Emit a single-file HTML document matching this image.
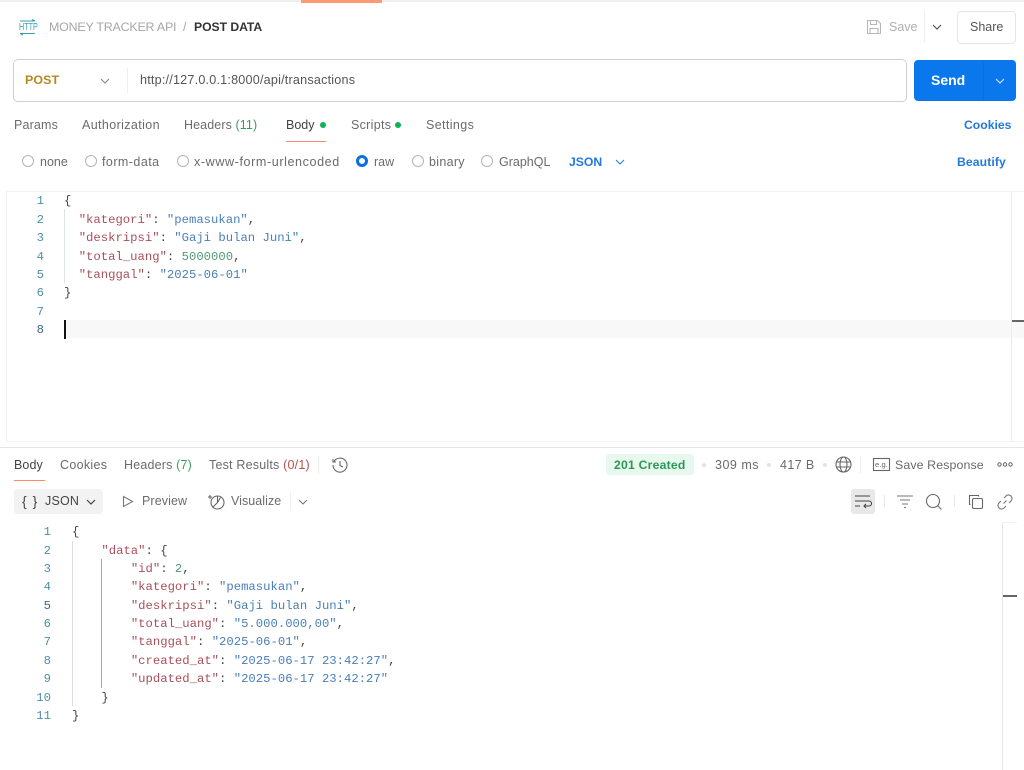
<!DOCTYPE html>
<html><head><meta charset="utf-8"><style>
html,body{margin:0;padding:0;background:#fff;}
body{width:1024px;height:770px;overflow:hidden;position:relative;font-family:"Liberation Sans",sans-serif;font-size:12.5px;color:#6b6b6b;filter:blur(.25px);}
.t{position:absolute;white-space:nowrap;line-height:16px;}
.b{position:absolute;}
.c{position:absolute;white-space:pre;font-family:"Liberation Mono",monospace;font-size:12.25px;line-height:18px;color:#444;margin-top:1px;}
.n{position:absolute;white-space:pre;font-family:"Liberation Mono",monospace;font-size:12.25px;line-height:18px;color:#4f8fa8;text-align:right;width:20px;margin-top:1px;}
.k{color:#a8505a}.s{color:#4a7fb8}.m{color:#4f9a78}
.r{position:absolute;width:12px;height:12px;box-sizing:border-box;border:1px solid #b4b4b4;border-radius:50%;top:155px;}
svg{position:absolute;overflow:visible;fill:none;}
.blue{color:#2279dc;font-weight:bold}
</style></head><body>

<div class="b" style="left:0;top:0;width:1024px;height:2px;background:#f0f0f0"></div>
<div class="b" style="left:301px;top:0;width:81px;height:3px;background:#ff9a76"></div>

<svg style="left:19px;top:19px" width="18" height="17" viewBox="0 0 18 17" stroke="#3a9db0" stroke-width="1">
<path d="M1 2h15M13 0.5l3 1.5"/><path d="M1 14.5h15M1 14.5l3 1.5"/>
</svg>
<div class="t" style="left:19px;top:22px;font-size:10px;line-height:11px;color:#3a9db0;transform:scaleX(.72);transform-origin:0 0">HTTP</div>

<div class="t" style="left:49px;top:19px;color:#a6a6a6;font-size:12.4px;letter-spacing:-.18px">MONEY TRACKER API</div>
<div class="t" style="left:183px;top:19px;color:#a6a6a6">/</div>
<div class="t" style="left:194px;top:19px;color:#333;font-size:12.2px;font-weight:bold;letter-spacing:-.05px">POST DATA</div>

<svg style="left:866px;top:19px" width="16" height="16" viewBox="0 0 16 16" stroke="#b8b8b8" stroke-width="1.1">
<path d="M1.5 1.5h10l3 3v10h-13z"/><path d="M4.5 1.5v4h6v-4M4 14.5v-5h8v5"/>
</svg>
<div class="t" style="left:889px;top:19px;color:#b0b0b0">Save</div>
<div class="b" style="left:924px;top:11px;width:1px;height:32px;background:#f0f0f0"></div>
<svg style="left:932px;top:24px" width="10" height="6" viewBox="0 0 10 6" stroke="#555" stroke-width="1.2"><path d="M1 1l4 4 4-4"/></svg>
<div class="b" style="left:957px;top:11px;width:59px;height:33px;box-sizing:border-box;border:1px solid #e6e6e6;border-radius:4px"></div>
<div class="t" style="left:970px;top:19px;color:#555">Share</div>

<div class="b" style="left:13px;top:59px;width:894px;height:43px;box-sizing:border-box;border:1px solid #cfcfcf;border-radius:5px"></div>
<div class="t" style="left:25px;top:72px;color:#b5871f;font-weight:bold;font-size:12.4px;letter-spacing:.1px">POST</div>
<svg style="left:100px;top:78px" width="10" height="6" viewBox="0 0 10 6" stroke="#888" stroke-width="1.1"><path d="M1 1l4 4 4-4"/></svg>
<div class="b" style="left:127px;top:68px;width:1px;height:25px;background:#eee"></div>
<div class="t" style="left:140px;top:72px;color:#555;font-size:12.6px;letter-spacing:.21px">http://127.0.0.1:8000/api/transactions</div>

<div class="b" style="left:914px;top:60px;width:102px;height:41px;background:#0a78ec;border-radius:4px"></div>
<div class="b" style="left:983px;top:60px;width:1px;height:41px;background:#0b70dd"></div>
<div class="t" style="left:931px;top:72px;color:#fff;font-weight:bold;font-size:14px">Send</div>
<svg style="left:995px;top:78px" width="10" height="6" viewBox="0 0 10 6" stroke="#d5e8fc" stroke-width="1.1"><path d="M1 1l4 4 4-4"/></svg>

<div class="t" style="left:14px;top:117px;letter-spacing:.15px">Params</div>
<div class="t" style="left:82px;top:117px;letter-spacing:.38px">Authorization</div>
<div class="t" style="left:184px;top:117px;letter-spacing:.1px">Headers <span style="color:#3d9a62">(11)</span></div>
<div class="t" style="left:286px;top:117px;color:#444">Body</div>
<div class="b" style="left:320px;top:122px;width:6px;height:6px;border-radius:50%;background:#0cb25a"></div>
<div class="b" style="left:286px;top:141px;width:40px;height:1px;background:#ff8a65"></div>
<div class="t" style="left:351px;top:117px;letter-spacing:.3px">Scripts</div>
<div class="b" style="left:395px;top:122px;width:6px;height:6px;border-radius:50%;background:#0cb25a"></div>
<div class="t" style="left:426px;top:117px;letter-spacing:.38px">Settings</div>
<div class="t blue" style="left:964px;top:117px;font-size:12.2px">Cookies</div>

<div class="r" style="left:22px"></div><div class="t" style="left:40px;top:154px">none</div>
<div class="r" style="left:85px"></div><div class="t" style="left:102px;top:154px;letter-spacing:.45px">form-data</div>
<div class="r" style="left:177px"></div><div class="t" style="left:194px;top:154px;font-size:12.6px;letter-spacing:.58px">x-www-form-urlencoded</div>
<div class="r" style="left:356px;border:3px solid #0a6fe0"></div><div class="t" style="left:374px;top:154px">raw</div>
<div class="r" style="left:412px"></div><div class="t" style="left:429px;top:154px;letter-spacing:.3px">binary</div>
<div class="r" style="left:481px"></div><div class="t" style="left:499px;top:154px">GraphQL</div>
<div class="t blue" style="left:569px;top:154px;font-size:12.2px">JSON</div>
<svg style="left:615px;top:159px" width="10" height="6" viewBox="0 0 10 6" stroke="#2a7fd9" stroke-width="1.1"><path d="M1 1l4 4 4-4"/></svg>
<div class="t blue" style="left:957px;top:154px;font-size:12.2px;letter-spacing:.1px">Beautify</div>

<div class="b" style="left:6px;top:191px;width:1018px;height:251px;box-sizing:border-box;border:1px solid #f1f1f1;border-right:0"></div>
<div class="b" style="left:64px;top:320px;width:960px;height:18px;background:#f8f8f8"></div>
<div class="b" style="left:1011px;top:191px;width:1px;height:250px;background:#ececec"></div>
<div class="b" style="left:1012px;top:320px;width:12px;height:2px;background:#666"></div>
<div class="b" style="left:64px;top:209px;width:1px;height:74px;background:#dde3e8"></div>
<div class="b" style="left:64px;top:320px;width:2px;height:19px;background:#111"></div>

<div class="n" style="left:24px;top:191px">1</div>
<div class="n" style="left:24px;top:210px">2</div>
<div class="n" style="left:24px;top:228px">3</div>
<div class="n" style="left:24px;top:247px">4</div>
<div class="n" style="left:24px;top:265px">5</div>
<div class="n" style="left:24px;top:283px">6</div>
<div class="n" style="left:24px;top:302px">7</div>
<div class="n" style="left:24px;top:320px;color:#3d6a8a">8</div>

<div class="c" style="left:64px;top:191px">{</div>
<div class="c" style="left:64px;top:210px">  <span class="k">"kategori"</span>: <span class="s">"pemasukan"</span>,</div>
<div class="c" style="left:64px;top:228px">  <span class="k">"deskripsi"</span>: <span class="s">"Gaji bulan Juni"</span>,</div>
<div class="c" style="left:64px;top:247px">  <span class="k">"total_uang"</span>: <span class="m">5000000</span>,</div>
<div class="c" style="left:64px;top:265px">  <span class="k">"tanggal"</span>: <span class="s">"2025-06-01"</span></div>
<div class="c" style="left:64px;top:283px">}</div>

<div class="b" style="left:0;top:447px;width:1024px;height:1px;background:#e6e6e6"></div>

<div class="t" style="left:14px;top:457px;color:#444;letter-spacing:.1px">Body</div>
<div class="b" style="left:14px;top:480px;width:31px;height:1px;background:#ff8a65"></div>
<div class="t" style="left:60px;top:457px;letter-spacing:.3px">Cookies</div>
<div class="t" style="left:124px;top:457px;letter-spacing:.18px">Headers <span style="color:#3d9a62">(7)</span></div>
<div class="t" style="left:209px;top:457px;letter-spacing:.2px">Test Results <span style="color:#b5524a">(0/1)</span></div>
<div class="b" style="left:318px;top:456px;width:1px;height:18px;background:#eee"></div>
<svg style="left:332px;top:457px" width="16" height="16" viewBox="0 0 16 16" stroke="#666" stroke-width="1.1">
<path d="M2 4.5A7 7 0 1 1 1 8"/><path d="M1 2v3h3"/><path d="M8 4v4.5l3 1.5"/>
</svg>

<div class="b" style="left:606px;top:454px;width:88px;height:21px;background:#e7f8ee;border-radius:4px"></div>
<div class="t" style="left:614px;top:457px;color:#2b9757;font-weight:bold;font-size:12.2px;letter-spacing:.22px">201 Created</div>
<div class="b" style="left:702px;top:463px;width:4px;height:4px;border-radius:50%;background:#e2e2e2"></div>
<div class="t" style="left:715px;top:457px;letter-spacing:.5px">309 ms</div>
<div class="b" style="left:767px;top:463px;width:4px;height:4px;border-radius:50%;background:#e2e2e2"></div>
<div class="t" style="left:780px;top:457px;letter-spacing:.4px">417 B</div>
<div class="b" style="left:823px;top:463px;width:4px;height:4px;border-radius:50%;background:#e2e2e2"></div>
<svg style="left:835px;top:456px" width="17" height="17" viewBox="0 0 17 17" stroke="#666" stroke-width="1.1">
<circle cx="8.5" cy="8.5" r="7.5"/><ellipse cx="8.5" cy="8.5" rx="3.5" ry="7.5"/><path d="M1.5 6h14M1.5 11h14"/>
</svg>
<div class="b" style="left:860px;top:456px;width:1px;height:17px;background:#eee"></div>
<svg style="left:873px;top:458px" width="17" height="13" viewBox="0 0 17 13" stroke="#666" stroke-width="1.1"><rect x=".5" y=".5" width="16" height="12"/></svg>
<div class="t" style="left:875px;top:459px;font-size:7.5px;line-height:11px;color:#666;letter-spacing:.1px">e.g.</div>
<div class="t" style="left:895px;top:457px;font-size:12.4px;letter-spacing:.1px">Save Response</div>
<svg style="left:997px;top:462px" width="16" height="5" viewBox="0 0 16 5" stroke="#666" stroke-width="1"><circle cx="2.5" cy="2.5" r="1.7"/><circle cx="8" cy="2.5" r="1.7"/><circle cx="13.5" cy="2.5" r="1.7"/></svg>

<div class="b" style="left:14px;top:489px;width:89px;height:25px;background:#f2f2f2;border-radius:4px"></div>
<div class="t" style="left:22px;top:493px;color:#444;font-size:14px;font-family:'Liberation Sans',sans-serif;letter-spacing:1px">{ }</div>
<div class="t" style="left:45px;top:493px;color:#444;letter-spacing:.2px">JSON</div>
<svg style="left:86px;top:499px" width="10" height="6" viewBox="0 0 10 6" stroke="#444" stroke-width="1.2"><path d="M1 1l4 4 4-4"/></svg>
<svg style="left:122px;top:495px" width="12" height="13" viewBox="0 0 12 13" stroke="#777" stroke-width="1.1"><path d="M1.5 1.5l9 5-9 5z"/></svg>
<div class="t" style="left:142px;top:493px;letter-spacing:.1px">Preview</div>
<svg style="left:208px;top:493px" width="17" height="17" viewBox="0 0 17 17" stroke="#666" stroke-width="1.1"><circle cx="9.5" cy="9.5" r="6.5"/><path d="M9.5 3v6.5L5 14M9.5 9.5l3-5M2 2v4M0 4h4"/></svg>
<div class="t" style="left:231px;top:493px;letter-spacing:.05px">Visualize</div>
<div class="b" style="left:290px;top:492px;width:1px;height:18px;background:#f0f0f0"></div>
<svg style="left:298px;top:499px" width="10" height="6" viewBox="0 0 10 6" stroke="#777" stroke-width="1.1"><path d="M1 1l4 4 4-4"/></svg>

<div class="b" style="left:851px;top:489px;width:24px;height:25px;background:#e8e8e8;border-radius:3px"></div>
<svg style="left:855px;top:495px" width="16" height="13" viewBox="0 0 16 13" stroke="#444" stroke-width="1.1"><path d="M0 1h15M0 6h14a2.5 2.5 0 0 1 0 5H9M11 9l-2 2 2 2M0 11h5"/></svg>
<div class="b" style="left:884px;top:495px;width:1px;height:12px;background:#e8e8e8"></div>
<svg style="left:897px;top:495px" width="16" height="13" viewBox="0 0 16 13" stroke="#777" stroke-width="1.1"><path d="M0 1h16M3 5h10M5 9h6M7 12.5h2"/></svg>
<svg style="left:926px;top:494px" width="16" height="16" viewBox="0 0 16 16" stroke="#666" stroke-width="1.1"><circle cx="7" cy="7" r="6.5"/><path d="M11.5 11.5l4 4"/></svg>
<div class="b" style="left:954px;top:495px;width:1px;height:12px;background:#e8e8e8"></div>
<svg style="left:968px;top:494px" width="16" height="16" viewBox="0 0 16 16" stroke="#666" stroke-width="1.1"><rect x="4.5" y="4.5" width="10" height="10" rx="1.5"/><path d="M2.5 10.5h-1V1.5h9v1"/></svg>
<svg style="left:997px;top:494px" width="16" height="16" viewBox="0 0 16 16" stroke="#777" stroke-width="1.1"><path d="M6.5 9.5l3-3M7 4l2-2a3.2 3.2 0 0 1 5 5l-2 2M9 12l-2 2a3.2 3.2 0 0 1-5-5l2-2"/></svg>

<div class="b" style="left:1002px;top:522px;width:1px;height:248px;background:#e6e6e6"></div>
<div class="b" style="left:1003px;top:522px;width:14px;height:1px;background:#f2f2f2"></div>
<div class="b" style="left:1003px;top:595px;width:14px;height:2px;background:#666"></div>
<div class="b" style="left:72px;top:541px;width:1px;height:165px;background:#ddd"></div>
<div class="b" style="left:101px;top:559px;width:1px;height:129px;background:#aaa"></div>

<div class="n" style="left:31px;top:522px">1</div>
<div class="n" style="left:31px;top:541px">2</div>
<div class="n" style="left:31px;top:559px">3</div>
<div class="n" style="left:31px;top:577px">4</div>
<div class="n" style="left:31px;top:596px;color:#3d6a8a">5</div>
<div class="n" style="left:31px;top:614px">6</div>
<div class="n" style="left:31px;top:632px">7</div>
<div class="n" style="left:31px;top:651px">8</div>
<div class="n" style="left:31px;top:669px">9</div>
<div class="n" style="left:31px;top:688px">10</div>
<div class="n" style="left:31px;top:706px">11</div>

<div class="c" style="left:72px;top:522px">{</div>
<div class="c" style="left:72px;top:541px">    <span class="k">"data"</span>: {</div>
<div class="c" style="left:72px;top:559px">        <span class="k">"id"</span>: <span class="m">2</span>,</div>
<div class="c" style="left:72px;top:577px">        <span class="k">"kategori"</span>: <span class="s">"pemasukan"</span>,</div>
<div class="c" style="left:72px;top:596px">        <span class="k">"deskripsi"</span>: <span class="s">"Gaji bulan Juni"</span>,</div>
<div class="c" style="left:72px;top:614px">        <span class="k">"total_uang"</span>: <span class="s">"5.000.000,00"</span>,</div>
<div class="c" style="left:72px;top:632px">        <span class="k">"tanggal"</span>: <span class="s">"2025-06-01"</span>,</div>
<div class="c" style="left:72px;top:651px">        <span class="k">"created_at"</span>: <span class="s">"2025-06-17 23:42:27"</span>,</div>
<div class="c" style="left:72px;top:669px">        <span class="k">"updated_at"</span>: <span class="s">"2025-06-17 23:42:27"</span></div>
<div class="c" style="left:72px;top:688px">    }</div>
<div class="c" style="left:72px;top:706px">}</div>

</body></html>
